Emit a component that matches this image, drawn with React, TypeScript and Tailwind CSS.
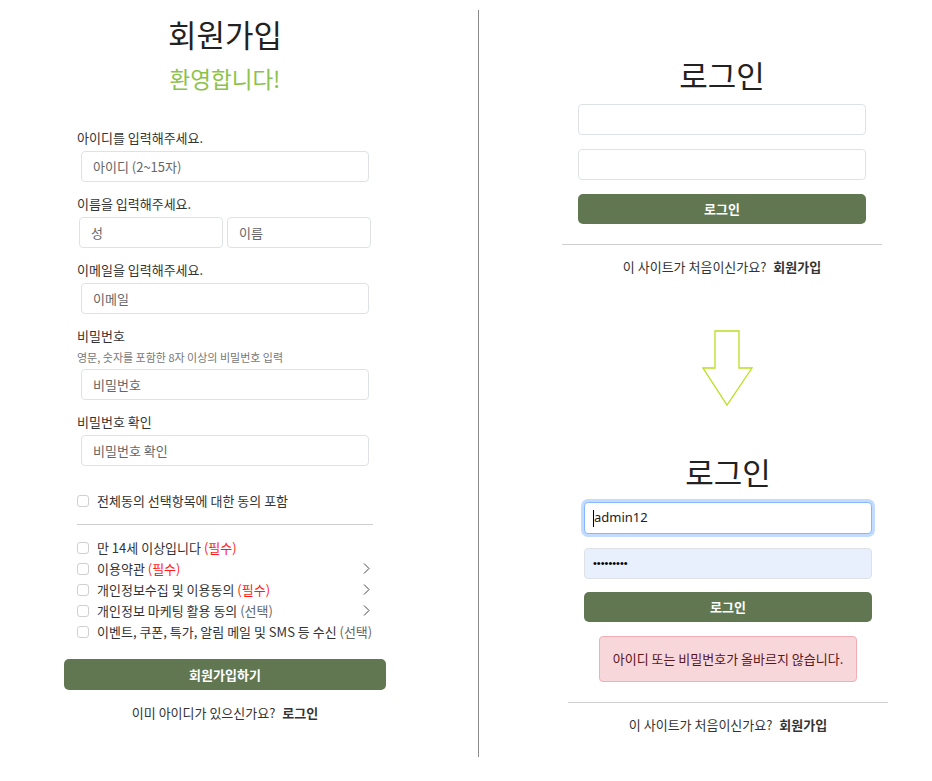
const agreeItems = [
  { text: '만 14세 이상입니다', tag: '(필수)', required: true, more: false },
  { text: '이용약관', tag: '(필수)', required: true, more: true },
  { text: '개인정보수집 및 이용동의', tag: '(필수)', required: true, more: true },
  { text: '개인정보 마케팅 활용 동의', tag: '(선택)', required: false, more: true },
  { text: '이벤트, 쿠폰, 특가, 알림 메일 및 SMS 등 수신', tag: '(선택)', required: false, more: false },
];

const inputCls =
  'h-[31px] w-full rounded-[4px] border border-[#dee2e6] bg-white px-[11px] text-[13px] text-[#333] placeholder:text-[#666] outline-none';

function Field({ label, hint, children }: { label: string; hint?: string; children: React.ReactNode }) {
  return (
    <div className="mt-3 first:mt-0">
      <div className="h-5 text-[13px] leading-5 text-[#333]">{label}</div>
      {hint && <div className="mt-[3px] h-4 text-[11px] leading-4 text-[#777]">{hint}</div>}
      <div className={hint ? 'mt-1' : 'mt-[3px]'}>{children}</div>
    </div>
  );
}

function Check({ children }: { children: React.ReactNode }) {
  return (
    <label className="flex h-[21px] items-center gap-2 text-[13px] text-[#333]">
      <input
        type="checkbox"
        className="h-3 w-3 shrink-0 appearance-none rounded-[3px] border border-[#d0d0d0] bg-white"
      />
      {children}
    </label>
  );
}

function Chevron() {
  return (
    <svg width="7" height="11" viewBox="0 0 7 11" className="mr-[3px]">
      <path d="M1 0.5 L6 5.5 L1 10.5" fill="none" stroke="#444" strokeWidth="1" />
    </svg>
  );
}

function SignupForm() {
  return (
    <div className="w-[450px] pt-[14px]">
      <h1 className="text-center text-[31px] leading-10 text-[#222]">회원가입</h1>
      <p className="mt-[9px] text-center text-[22.5px] leading-[30px] text-[#8bc34a]">환영합니다!</p>

      <form className="ml-[77px] mt-[35px] w-[296px]">
        <Field label="아이디를 입력해주세요.">
          <div className="px-1">
            <input className={inputCls} placeholder="아이디 (2~15자)" />
          </div>
        </Field>
        <Field label="이름을 입력해주세요.">
          <div className="flex gap-1 px-0.5">
            <input className={inputCls} placeholder="성" />
            <input className={inputCls} placeholder="이름" />
          </div>
        </Field>
        <Field label="이메일을 입력해주세요.">
          <div className="px-1">
            <input className={inputCls} placeholder="이메일" />
          </div>
        </Field>
        <Field label="비밀번호" hint="영문, 숫자를 포함한 8자 이상의 비밀번호 입력">
          <div className="px-1">
            <input className={inputCls} placeholder="비밀번호" type="password" />
          </div>
        </Field>
        <Field label="비밀번호 확인">
          <div className="px-1">
            <input className={inputCls} placeholder="비밀번호 확인" type="password" />
          </div>
        </Field>

        <div className="mt-6">
          <Check>전체동의 선택항목에 대한 동의 포함</Check>
        </div>
        <hr className="mt-[13px] border-[#cfcfcf]" />
        <div className="mt-3 flex flex-col">
          {agreeItems.map((item) => (
            <div key={item.text} className="flex items-center justify-between">
              <Check>
                <span>
                  {item.text}{' '}
                  <span className={item.required ? 'text-[#ff1a1a]' : 'text-[#666]'}>{item.tag}</span>
                </span>
              </Check>
              {item.more && <Chevron />}
            </div>
          ))}
        </div>
      </form>

      <button className="ml-[64px] mt-[17px] h-[31px] w-[322px] rounded-[5px] bg-[#617752] text-[13px] font-bold text-white">
        회원가입하기
      </button>
      <p className="mt-[13px] text-center text-[13px] leading-5 text-[#333]">
        이미 아이디가 있으신가요? <b className="ml-1">로그인</b>
      </p>
    </div>
  );
}

function LoginBox() {
  return (
    <div className="ml-[83px] w-[320px] pt-[55px]">
      <h2 className="text-center text-[31px] leading-10 text-[#222]">로그인</h2>
      <div className="mt-[9px] flex flex-col gap-[14px] px-4">
        <input className={inputCls} />
        <input className={inputCls} type="password" />
        <button className="h-[30px] rounded-[5px] bg-[#617752] text-[13px] font-bold text-white">로그인</button>
      </div>
      <hr className="mt-5 border-[#cfcfcf]" />
      <p className="mt-3 text-center text-[13px] leading-5 text-[#333]">
        이 사이트가 처음이신가요? <b className="ml-1">회원가입</b>
      </p>
    </div>
  );
}

function LoginFailed() {
  return (
    <div className="ml-[89px] w-[320px]">
      <div className="flex justify-center">
        <svg width="53" height="77" viewBox="0 0 53 77" className="mt-[53px] ml-px">
          <path d="M13 1 H37 V38 H50 L25 75 L1 38 H13 Z" fill="none" stroke="#b9e021" strokeWidth="1.3" />
        </svg>
      </div>
      <h2 className="mt-[45px] text-center text-[31px] leading-10 text-[#222]">로그인</h2>
      <div className="mt-[10px] flex flex-col gap-[14px] px-4">
        <div className="flex h-[32px] items-center rounded-[4px] border border-[#86b7fe] bg-white px-[8px] text-[13px] text-[#222] shadow-[0_0_0_3px_rgba(13,110,253,0.25)]">
          <span className="h-[17px] w-px bg-black" />
          <span className="font-['Noto_Sans',sans-serif]">admin12</span>
        </div>
        <div className="flex h-[31px] items-center rounded-[4px] border border-[#dee2e6] bg-[#e8f0fe] px-[8px] font-['Liberation_Sans',sans-serif] text-[11px] text-black">
          •••••••••
        </div>
        <button className="-mt-[1px] h-[30px] rounded-[5px] bg-[#617752] text-[13px] font-bold text-white">로그인</button>
      </div>
      <div className="mx-[31px] mt-[14px] flex h-[46px] items-center justify-center rounded-[4px] border border-[#f1aeb5] bg-[#f8d7da] text-[13px] text-[#58151c]">
        아이디 또는 비밀번호가 올바르지 않습니다.
      </div>
      <hr className="mt-5 border-[#cfcfcf]" />
      <p className="mt-3 text-center text-[13px] leading-5 text-[#333]">
        이 사이트가 처음이신가요? <b className="ml-1">회원가입</b>
      </p>
    </div>
  );
}

export default function App() {
  return (
    <div className="flex h-[781px] w-[932px] bg-white font-['Noto_Sans_CJK_KR','Noto_Sans',sans-serif]">
      <div className="w-[478px]">
        <SignupForm />
      </div>
      <div className="mt-[10px] h-[747px] w-px bg-[#8a8a8a]" />
      <div className="flex flex-1 flex-col">
        <LoginBox />
        <LoginFailed />
      </div>
    </div>
  );
}
